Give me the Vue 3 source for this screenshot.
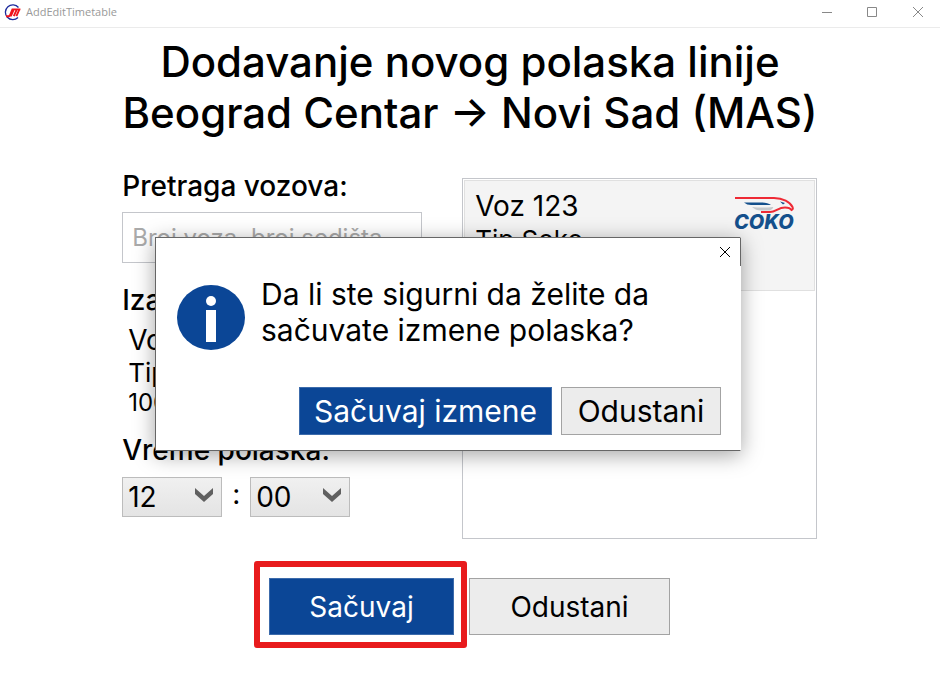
<script setup>
import { ref } from 'vue'

const search = ref('')
const hour = ref('12')
const minute = ref('00')
const pad = (n) => String(n).padStart(2, '0')
const hours = Array.from({ length: 24 }, (_, i) => pad(i))
const minutes = Array.from({ length: 60 }, (_, i) => pad(i))
const train = { name: 'Voz 123', type: 'Tip Soko', seats: '100 sedišta' }
</script>

<template>
  <div class="window">
    <header class="titlebar">
      <svg class="app-icon" viewBox="0 0 17 17" aria-hidden="true">
        <path d="M14.500 3.500A7.400 7.400 0 1 0 14 13.500" fill="none" stroke="#1c2a9c" stroke-width="1.300" />
        <path d="M2 12.200h2.600q1 0 1.600-1.400L8.400 5.400h8M6.800 12.200l3-6.800M9.800 12.200l3-6.800M12.400 12.200l3-6.800" fill="none" stroke="#f0141e" stroke-width="1.900" />
      </svg>
      <span class="app-name">AddEditTimetable</span>
      <div class="window-controls">
        <button type="button" aria-label="Minimize"><svg viewBox="0 0 12 12"><path d="M0 6.500h10" /></svg></button>
        <button type="button" aria-label="Maximize"><svg viewBox="0 0 12 12"><path d="M.5 1.500h9v9h-9z" /></svg></button>
        <button type="button" aria-label="Close"><svg viewBox="0 0 12 12"><path d="M1 1l10 10M11 1L1 11" /></svg></button>
      </div>
    </header>

    <main class="page">
      <h1>Dodavanje novog polaska linije<br />Beograd Centar → Novi Sad (MAS)</h1>

      <div class="columns">
        <section class="form">
          <label class="caption" for="search">Pretraga vozova:</label>
          <input id="search" v-model="search" class="search" type="text" placeholder="Broj voza, broj sedišta..." />

          <h2 class="caption chosen-title">Izabrani voz:</h2>
          <div class="chosen">
            <p>{{ train.name }}</p>
            <p class="chosen-type">{{ train.type }}</p>
            <p class="chosen-seats">{{ train.seats }}</p>
          </div>

          <h2 class="caption time-title">Vreme polaska:</h2>
          <div class="time">
            <div class="picker">
              <select v-model="hour" aria-label="Sat"><option v-for="h in hours" :key="h">{{ h }}</option></select>
              <svg viewBox="0 0 20 16" aria-hidden="true"><path d="M1 0v6l9 8 9-8V0l-9 8z" /></svg>
            </div>
            <span class="colon">:</span>
            <div class="picker">
              <select v-model="minute" aria-label="Minut"><option v-for="m in minutes" :key="m">{{ m }}</option></select>
              <svg viewBox="0 0 20 16" aria-hidden="true"><path d="M1 0v6l9 8 9-8V0l-9 8z" /></svg>
            </div>
          </div>
        </section>

        <ul class="trains">
          <li class="train">
            <div>
              <p>{{ train.name }}</p>
              <p class="train-type">{{ train.type }}</p>
              <p class="train-type">{{ train.seats }}</p>
            </div>
            <div class="brand">
              <svg viewBox="0 0 60 18" aria-hidden="true">
                <path d="M1 2H40C49 2 56 6 58.500 11Q59.500 13.500 57.500 14Q56 11.500 51 11.500C44 11.500 42 16 36 16H27" fill="none" stroke="#ee2a35" stroke-width="2" />
                <path d="M10 6.500h18q6 0 9 2.500H17q-4 0-7-2.500z" fill="#14508c" />
                <path d="M18 11q11 1 21 0 1 1.500-3 3.500H27q-5 0-9-3.500z" fill="#c6c9cc" />
                <path d="M46 5.500l5 1.500-2 1.500z" fill="#14508c" />
              </svg>
              <span>COKO</span>
            </div>
          </li>
        </ul>
      </div>

      <div class="actions">
        <div class="highlight"><button type="button" class="btn primary">Sačuvaj</button></div>
        <button type="button" class="btn cancel">Odustani</button>
      </div>
    </main>

    <div class="dialog" role="dialog" aria-modal="true" aria-labelledby="question">
      <button type="button" class="dialog-close" aria-label="Zatvori">
        <svg viewBox="0 0 12 12"><path d="M1 1l10 10M11 1L1 11" /></svg>
      </button>
      <div class="message">
        <svg class="info" viewBox="0 0 68 66" aria-hidden="true">
          <ellipse cx="34" cy="33.500" rx="34" ry="32.500" fill="#0b4696" />
          <circle cx="34" cy="17" r="5" fill="#fff" />
          <path d="M29 26h10v32H29z" fill="#fff" />
        </svg>
        <p id="question">Da li ste sigurni da želite da sačuvate izmene polaska?</p>
      </div>
      <div class="dialog-actions">
        <button type="button" class="btn primary">Sačuvaj izmene</button>
        <button type="button" class="btn">Odustani</button>
      </div>
    </div>
  </div>
</template>

<style>
body {
  background: #fff;
}
</style>

<style scoped>
* {
  box-sizing: border-box;
}
.window {
  position: relative;
  min-height: 100vh;
  color: #000;
  font-family: Inter, "Liberation Sans", sans-serif;
  font-size: 28px;
  line-height: 34px;
}
h1, h2, p, ul {
  margin: 0;
  padding: 0;
}
button, input, select {
  font: inherit;
  color: inherit;
}
.titlebar {
  display: flex;
  align-items: center;
  height: 28px;
  padding: 0 0 3px 4px;
  border-bottom: 1px solid #ebebeb;
}
.app-icon {
  width: 17px;
  height: 17px;
}
.app-name {
  flex: 1;
  margin-left: 5px;
  color: #999;
  font-family: "Open Sans", sans-serif;
  font-size: 11px;
  line-height: 16px;
}
.window-controls {
  display: flex;
}
.window-controls button {
  display: grid;
  place-items: center;
  width: 45px;
  height: 24px;
  padding: 0;
  border: 0;
  background: none;
}
.window-controls svg,
.dialog-close svg {
  width: 12px;
  height: 12px;
  fill: none;
  stroke: #888;
}
.page {
  width: 74%;
  margin: 0 auto;
  padding: 8px 0 28px;
}
h1 {
  font-size: 42px;
  font-weight: 450;
  line-height: 51px;
  text-align: center;
  white-space: nowrap;
}
.columns {
  display: grid;
  grid-template-columns: 300px 1fr;
  gap: 40px;
  margin-top: 31px;
  padding-right: 1px;
}
.form {
  display: flex;
  flex-direction: column;
}
.caption {
  font-size: 28px;
  font-weight: 450;
  line-height: 34px;
}
.search {
  width: 100%;
  height: 51px;
  margin-top: 9px;
  padding: 0 9px;
  border: 1px solid #c4c6cb;
  background: #fff;
  font-size: 24px;
}
.search::placeholder {
  color: #aaa;
  opacity: 1;
}
.chosen-title {
  margin-top: 20px;
}
.chosen {
  padding: 6px 0 0 6px;
}
.chosen-type {
  font-size: 26px;
  line-height: 32px;
}
.chosen-seats {
  font-size: 24px;
  line-height: 28px;
}
.time-title {
  margin-top: 16px;
}
.time {
  display: flex;
  margin-top: 10px;
}
.picker {
  position: relative;
  width: 100px;
}
.picker select {
  display: block;
  width: 100%;
  height: 40px;
  padding: 0 5px;
  border: 1px solid #bcbcbc;
  border-radius: 0;
  appearance: none;
  background: linear-gradient(#f0f0f0, #e4e4e4);
}
.picker svg {
  position: absolute;
  top: 11px;
  right: 8px;
  width: 20px;
  height: 16px;
  fill: #606060;
  pointer-events: none;
}
.colon {
  width: 28px;
  text-align: center;
}
.trains {
  min-height: 361px;
  margin-top: 9px;
  padding: 1px;
  border: 1px solid #c4c6cb;
  list-style: none;
}
.train {
  display: flex;
  justify-content: space-between;
  padding: 9px 20px 0 10px;
  height: 111px;
  border: 1px solid #e0e0e0;
  background: #f4f4f4;
  line-height: 33px;
}
.train-type {
  font-size: 26px;
}
.brand {
  display: flex;
  flex-direction: column;
  width: 60px;
  padding-top: 6px;
}
.brand svg {
  height: 18px;
}
.brand span {
  color: #14508c;
  font-size: 20px;
  font-style: italic;
  font-weight: 800;
  line-height: 16px;
  text-align: center;
}
.actions {
  display: flex;
  align-items: flex-end;
  justify-content: center;
  gap: 2px;
  margin-top: 22px;
  padding-right: 16px;
}
.highlight {
  padding: 11px 7px 7px 9px;
  border: 6px solid #e81b1d;
  border-radius: 3px;
}
.btn {
  width: 201px;
  height: 57px;
  padding: 0;
  border: 1px solid #a3a3a3;
  background: #ececec;
}
.primary {
  border-color: #3c6bab;
  background: #0b4696;
  color: #fff;
}
.highlight .btn {
  display: block;
  width: 185px;
}
.cancel {
  margin-bottom: 13px;
}
.dialog {
  position: absolute;
  top: 237px;
  left: calc(50% - 315px);
  width: 586px;
  padding: 38px 19px 15px 21px;
  border: 1px solid #666;
  border-right-color: #fff;
  background: #fff;
  box-shadow: 0 4px 20px rgba(0, 0, 0, 0.36);
}
.dialog-close {
  position: absolute;
  top: 0;
  right: -1px;
  display: grid;
  place-items: center;
  width: 32px;
  height: 28px;
  padding: 0;
  border: 0;
  border-right: 1px solid #666;
  background: none;
}
.dialog-close svg {
  stroke: #000;
}
.message {
  display: flex;
  align-items: flex-start;
  gap: 16px;
  font-size: 30px;
  line-height: 36px;
}
.info {
  flex: none;
  width: 68px;
  height: 66px;
  margin-top: 8px;
}
.dialog-actions {
  display: flex;
  justify-content: flex-end;
  gap: 9px;
  margin-top: 37px;
}
.dialog-actions .btn {
  width: 160px;
  height: 48px;
  font-size: 30px;
}
.dialog-actions .primary {
  width: 253px;
}
</style>
